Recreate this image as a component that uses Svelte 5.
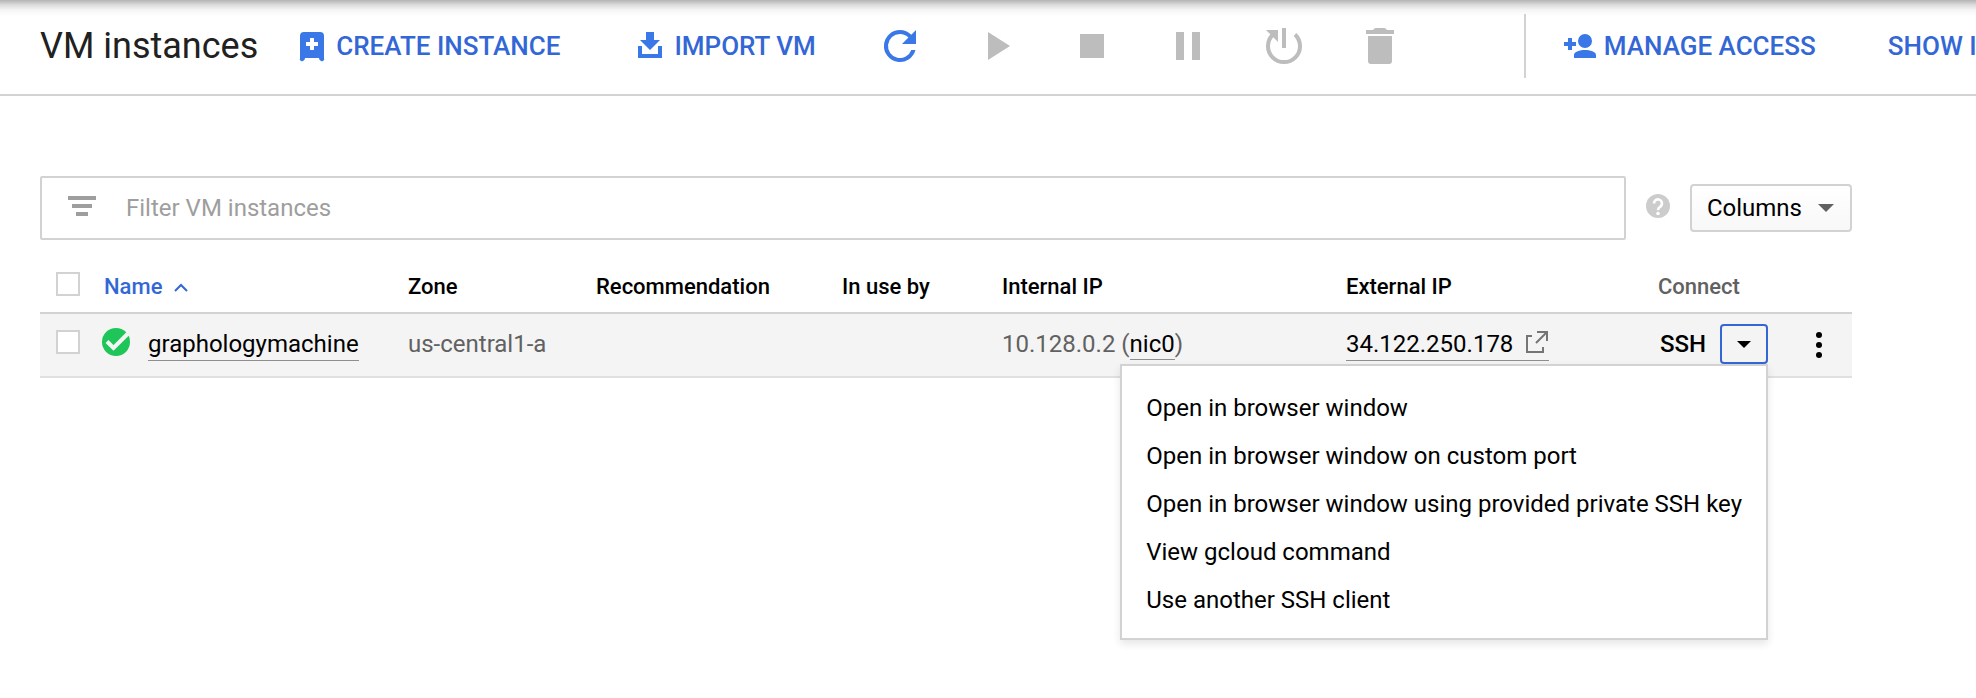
<script>
  const menuItems = [
    'Open in browser window',
    'Open in browser window on custom port',
    'Open in browser window using provided private SSH key',
    'View gcloud command',
    'Use another SSH client',
  ];

  let filter = $state('');
  let menuOpen = $state(true);
  let allSelected = $state(false);
  let rowSelected = $state(false);
</script>

<div class="page">
  <header class="toolbar">
    <h1>VM instances</h1>

    <button class="action create" type="button">
      <svg class="icon" viewBox="0 0 48 48" aria-hidden="true">
        <path fill-rule="evenodd" d="M16 10h16a4 4 0 0 1 4 4v22a2 2 0 0 1-4 2q-1 0-1-2H17q0 2-1 2a2 2 0 0 1-4-2V14a4 4 0 0 1 4-4zM22 16v4h-4v4h4v4h4v-4h4v-4h-4v-4z" />
      </svg>
      Create instance
    </button>

    <button class="action import" type="button">
      <svg class="icon" viewBox="0 0 48 48" aria-hidden="true">
        <path d="M20 10h8v8h6L24 28 14 18h6zM12 24h4v8h16v-8h4v12H12z" />
      </svg>
      Import VM
    </button>

    <div class="tools">
      <button class="tool" type="button" aria-label="Refresh">
        <svg class="icon" viewBox="0 0 24 24" aria-hidden="true">
          <path d="M17.65 6.35A7.96 7.96 0 0 0 12 4a8 8 0 1 0 7.73 10h-2.08A6 6 0 1 1 12 6c1.66 0 3.14.69 4.22 1.78L13 11h7V4z" />
        </svg>
      </button>
      <button class="tool" type="button" aria-label="Start" disabled>
        <svg class="icon" viewBox="0 0 24 24" aria-hidden="true"><path d="M8 5v14l11-7z" /></svg>
      </button>
      <button class="tool" type="button" aria-label="Stop" disabled>
        <svg class="icon" viewBox="0 0 24 24" aria-hidden="true"><path d="M6 6h12v12H6z" /></svg>
      </button>
      <button class="tool" type="button" aria-label="Suspend" disabled>
        <svg class="icon" viewBox="0 0 24 24" aria-hidden="true"><path d="M6 5h4v14H6zM14 5h4v14h-4z" /></svg>
      </button>
      <button class="tool" type="button" aria-label="Reset" disabled>
        <svg class="icon" viewBox="0 0 48 48" aria-hidden="true">
          <path d="M22 6h4v20h-4zM6 8h12v12z" />
          <path d="M13 12.500A16 16 0 1 0 35 12.500" fill="none" stroke="currentColor" stroke-width="4" />
        </svg>
      </button>
      <button class="tool" type="button" aria-label="Delete" disabled>
        <svg class="icon" viewBox="0 0 24 24" aria-hidden="true">
          <path d="M6 19.500A1.500 1.500 0 0 0 7.500 21h9a1.500 1.500 0 0 0 1.500-1.500V7H6zM19 4h-3.500l-.7-.7a1 1 0 0 0-.7-.3H9.900a1 1 0 0 0-.7.3l-.7.7H5v2h14z" />
        </svg>
      </button>
    </div>

    <button class="action access" type="button">
      <svg class="icon" viewBox="0 0 48 48" aria-hidden="true">
        <circle cx="29" cy="19" r="7" />
        <path d="M12 16h4v4h4v4h-4v4h-4v-4H8v-4h4zM18 36v-3c0-3.500 6-5 11-5s11 1.500 11 5v3z" />
      </svg>
      Manage access
    </button>
    <button class="action panel" type="button">Show info panel</button>
  </header>

  <main>
    <div class="controls">
      <label class="filter">
        <svg class="filter-icon" viewBox="0 0 28 20" aria-hidden="true">
          <path d="M0 0h28v4H0zM4 8h20v4H4zM8 16h12v4H8z" />
        </svg>
        <input type="text" aria-label="Filter VM instances" placeholder="Filter VM instances" bind:value={filter} />
      </label>
      <button class="help" type="button" aria-label="Help">
        <svg viewBox="0 0 24 24" aria-hidden="true">
          <circle cx="12" cy="12" r="12" />
          <path d="M8 9.500a4 4 0 1 1 6.800 2.700c-1.500 1.400-2.800 1.700-2.800 4" fill="none" stroke="#fff" stroke-width="2.600" />
          <circle cx="12" cy="19.500" r="1.800" fill="#fff" />
        </svg>
      </button>
      <button class="columns" type="button">
        Columns
        <svg viewBox="0 0 16 8" aria-hidden="true"><path d="M0 0h16L8 8z" /></svg>
      </button>
    </div>

    <table>
      <colgroup>
        <col class="c-check" /><col class="c-name" /><col class="c-zone" /><col class="c-rec" /><col class="c-use" />
        <col class="c-int" /><col /><col class="c-connect" /><col class="c-more" />
      </colgroup>
      <thead>
        <tr>
          <th class="check"><input type="checkbox" aria-label="Select all instances" bind:checked={allSelected} /></th>
          <th>
            <button class="sort" type="button">
              Name
              <svg viewBox="0 0 14 9" aria-hidden="true"><path d="M1 8l6-6 6 6" /></svg>
            </button>
          </th>
          <th>Zone</th>
          <th>Recommendation</th>
          <th>In use by</th>
          <th>Internal IP</th>
          <th>External IP</th>
          <th class="muted">Connect</th>
          <th></th>
        </tr>
      </thead>
      <tbody>
        <tr>
          <td class="check"><input type="checkbox" aria-label="Select graphologymachine" bind:checked={rowSelected} /></td>
          <td>
            <div class="name">
              <svg class="status" viewBox="0 0 28 28" role="img" aria-label="Running">
                <circle cx="14" cy="14" r="14" />
                <path d="M5 13.500l6.500 6.500L26 5.500" />
              </svg>
              <a href="#instance">graphologymachine</a>
            </div>
          </td>
          <td>us-central1-a</td>
          <td></td>
          <td></td>
          <td>10.128.0.2 (<a href="#nic0">nic0</a>)</td>
          <td>
            <a class="external" href="#external">
              34.122.250.178
              <svg viewBox="0 0 24 24" aria-hidden="true"><path d="M7 6H2v16h16v-5M12 2h10v9M22 2L11 13" /></svg>
            </a>
          </td>
          <td>
            <div class="connect">
              <button class="ssh" type="button">SSH</button>
              <button class="ssh-toggle" type="button" aria-label="SSH options" aria-expanded={menuOpen} onclick={() => (menuOpen = !menuOpen)}>
                <svg viewBox="0 0 14 7" aria-hidden="true"><path d="M0 0h14L7 7z" /></svg>
              </button>
              {#if menuOpen}
                <div class="menu" role="menu">
                  {#each menuItems as item}
                    <button type="button" role="menuitem">{item}</button>
                  {/each}
                </div>
              {/if}
            </div>
          </td>
          <td>
            <button class="more" type="button" aria-label="More actions">
              <svg viewBox="0 0 6 26" aria-hidden="true">
                <circle cx="3" cy="3" r="3" /><circle cx="3" cy="13" r="3" /><circle cx="3" cy="23" r="3" />
              </svg>
            </button>
          </td>
        </tr>
      </tbody>
    </table>
  </main>
</div>

<style>
  :global(body) {
    background: #fff;
  }

  .page {
    min-height: 100vh;
    color: #000;
    font-family: Roboto, 'Liberation Sans', sans-serif;
    font-size: 24px;
    line-height: 32px;
  }

  button {
    margin: 0;
    padding: 0;
    border: 0;
    background: none;
    color: inherit;
    font: inherit;
    white-space: nowrap;
    cursor: pointer;
  }

  svg {
    display: block;
    flex: none;
    fill: currentColor;
  }

  .toolbar {
    display: flex;
    align-items: center;
    box-sizing: border-box;
    height: 96px;
    padding: 0 0 2px 40px;
    border-bottom: 2px solid #d2d2d2;
    background: linear-gradient(#b4b4b4, #dcdcdc 5px, #f5f5f5 10px, #fff 16px);
    overflow: hidden;
  }

  h1 {
    flex: none;
    margin: 0 30px 0 0;
    color: #212121;
    font-size: 36px;
    font-weight: 400;
    line-height: 44px;
  }

  .action {
    display: flex;
    flex: none;
    align-items: center;
    color: #3367d6;
    font-size: 26px;
    font-weight: 500;
    text-transform: uppercase;
  }

  .icon {
    width: 48px;
    height: 48px;
    color: #3b78e7;
  }

  .import {
    margin-left: 66px;
  }

  .tools {
    display: flex;
    flex: none;
    gap: 48px;
    margin: 0 120px 0 60px;
  }

  .tool:disabled .icon {
    color: #bdbdbd;
  }

  .access {
    height: 64px;
    padding-left: 30px;
    border-left: 2px solid #d2d2d2;
  }

  .panel {
    margin-left: 72px;
  }

  main {
    padding: 80px 124px 0 40px;
  }

  .controls {
    display: flex;
    align-items: center;
  }

  .filter {
    display: flex;
    flex: 1;
    align-items: center;
    gap: 30px;
    box-sizing: border-box;
    height: 64px;
    padding: 0 26px;
    border: 2px solid #d2d2d2;
    border-radius: 2px;
  }

  .filter-icon {
    width: 28px;
    height: 20px;
    margin-bottom: 4px;
    color: #9e9e9e;
  }

  .filter input {
    flex: 1;
    min-width: 0;
    padding: 0;
    border: 0;
    outline: 0;
    background: none;
    color: inherit;
    font: inherit;
  }

  .filter input::placeholder {
    color: #9e9e9e;
    opacity: 1;
  }

  .help {
    margin: 0 20px;
    padding-bottom: 4px;
    color: #ccc;
  }

  .help svg {
    width: 24px;
    height: 24px;
  }

  .columns {
    display: flex;
    align-items: center;
    gap: 16px;
    height: 48px;
    padding: 0 16px 0 15px;
    border: 2px solid #d2d2d2;
    border-radius: 4px;
    background: linear-gradient(#fff, #f8f8f8);
  }

  .columns svg {
    width: 16px;
    height: 8px;
    color: #616161;
  }

  table {
    width: 100%;
    border-spacing: 0;
    table-layout: fixed;
  }

  .c-check { width: 62px; }
  .c-name { width: 306px; }
  .c-zone { width: 188px; }
  .c-rec { width: 246px; }
  .c-use { width: 160px; }
  .c-int { width: 344px; }
  .c-connect { width: 110px; }
  .c-more { width: 84px; }

  th,
  td {
    padding: 0;
    text-align: left;
    white-space: nowrap;
  }

  th {
    height: 72px;
    border-bottom: 2px solid #d2d2d2;
    font-size: 22px;
    font-weight: 500;
    vertical-align: bottom;
    line-height: 50px;
  }

  td {
    height: 60px;
    padding-bottom: 2px;
    border-bottom: 2px solid #e0e0e0;
    background: #f4f4f4;
    color: #616161;
  }

  .check input {
    appearance: none;
    display: block;
    box-sizing: border-box;
    width: 24px;
    height: 24px;
    margin: 0 0 16px 16px;
    border: 2px solid #d2d2d2;
    background: #fff;
  }

  td.check input {
    margin-bottom: 4px;
  }

  .check input:checked {
    background: #3b78e7;
  }

  .sort {
    display: flex;
    align-items: center;
    gap: 12px;
    padding-left: 2px;
    color: #3367d6;
  }

  .sort svg {
    width: 14px;
    height: 9px;
    fill: none;
    stroke: currentColor;
    stroke-width: 2;
  }

  .muted {
    color: #616161;
  }

  td a {
    border-bottom: 1px solid #8e8e8e;
    color: #000;
    text-decoration: none;
  }

  .name {
    display: flex;
    align-items: center;
    gap: 18px;
    padding-top: 2px;
  }

  .status {
    width: 28px;
    height: 28px;
    margin-bottom: 6px;
    fill: #1ec659;
  }

  .status path {
    fill: none;
    stroke: #f4f4f4;
    stroke-width: 4;
  }

  .external {
    display: inline-flex;
    align-items: center;
    gap: 12px;
  }

  .external svg {
    width: 24px;
    height: 24px;
    margin-bottom: 4px;
    fill: none;
    stroke: #757575;
    stroke-width: 2;
  }

  .name a,
  .external {
    line-height: 31px;
  }

  td > a:not(.external) {
    padding-bottom: 1px;
  }

  .connect {
    position: relative;
    display: flex;
    align-items: center;
    justify-content: space-between;
    padding-left: 2px;
  }

  .ssh {
    color: #000;
    font-weight: 500;
  }

  .ssh-toggle {
    display: grid;
    place-items: center;
    box-sizing: border-box;
    width: 48px;
    height: 40px;
    border: 2px solid #3367d6;
    border-radius: 4px;
    color: #000;
  }

  .ssh-toggle svg {
    width: 14px;
    height: 7px;
  }

  .menu {
    position: absolute;
    z-index: 1;
    top: 100%;
    right: 0;
    display: flex;
    flex-direction: column;
    padding: 18px 0 14px;
    border: 2px solid #d2d2d2;
    background: #fff;
    box-shadow: 0 4px 8px rgba(0, 0, 0, 0.1);
    color: #000;
  }

  .menu button {
    padding: 0 24px;
    line-height: 48px;
    text-align: left;
  }

  .menu button:hover {
    background: #f4f4f4;
  }

  .more {
    display: block;
    margin: 2px 30px 0 auto;
    color: #000;
  }

  .more svg {
    width: 6px;
    height: 26px;
  }
</style>
